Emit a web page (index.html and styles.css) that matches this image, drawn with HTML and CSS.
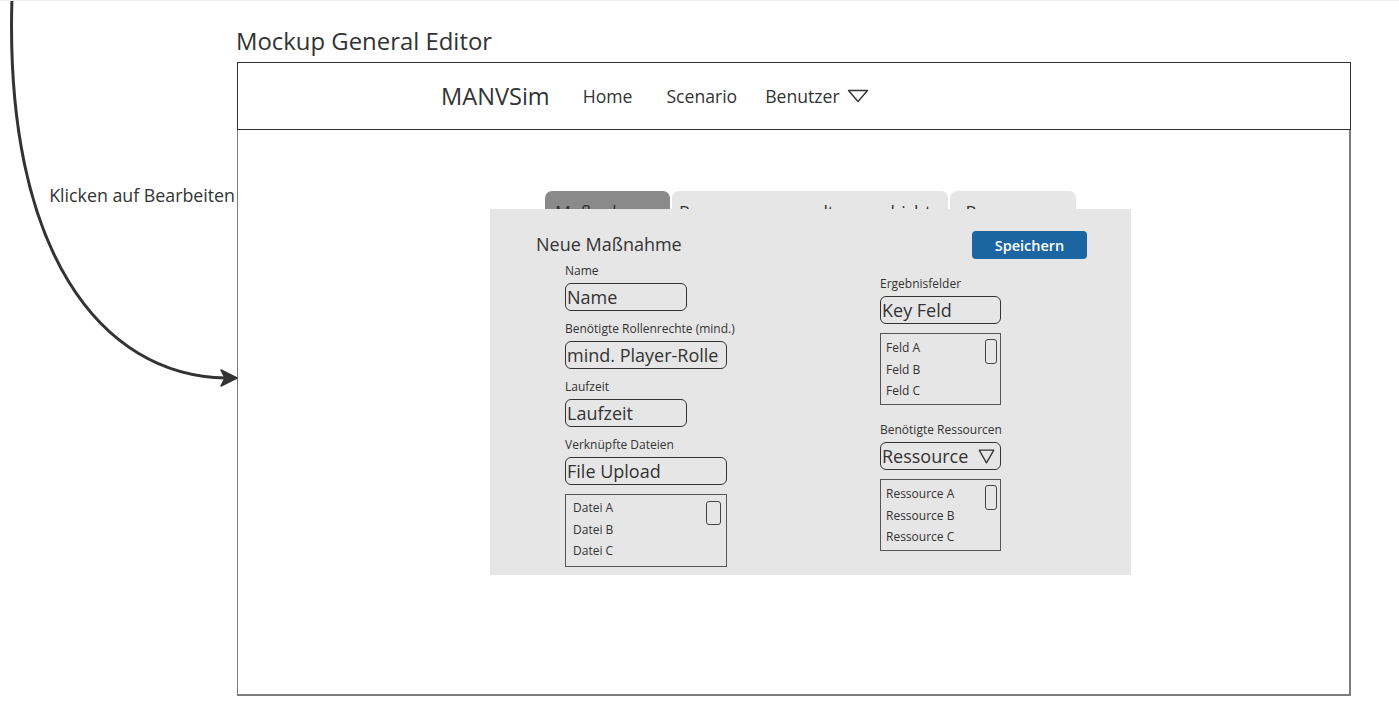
FILE: index.html
```html
<!DOCTYPE html>
<html lang="de">
<head>
<meta charset="utf-8">
<title>Mockup General Editor</title>
<link rel="stylesheet" href="styles.css">
</head>
<body>
<div class="page">
  <svg class="connector" width="240" height="392" viewBox="0 0 240 392" aria-hidden="true">
    <path d="M12,-2 C4,250 100,376 226,378" fill="none" stroke="#333" stroke-width="3"/>
    <path d="M221,370 L237,378 L221,386 L225,378 Z" fill="#333" stroke="#333" stroke-width="1.5" stroke-linejoin="round"/>
  </svg>

  <div class="title">Mockup General Editor</div>

  <div class="stage">
    <div class="note"><span>Klicken auf Bearbeiten</span></div>

    <div class="frame">
      <header class="topbar">
        <span class="brand">MANVSim</span>
        <span class="nav-item nav-home">Home</span>
        <span class="nav-item nav-scenario">Scenario</span>
        <span class="nav-item nav-user">Benutzer
          <svg class="tri tri-nav" width="22" height="14" viewBox="0 0 22 14"><path d="M1.5,1.5 L20.5,1.5 L11,12.5 Z" fill="none" stroke="#333" stroke-width="1.4" stroke-linejoin="round"/></svg>
        </span>
      </header>

      <main class="canvas">
        <div class="tabs">
          <div class="tab tab-active tab-1">Maßnahmen</div>
          <div class="tab tab-2">Ressourcenverwaltungsschichte</div>
          <div class="tab tab-3">Ressourcen</div>
        </div>

        <section class="panel">
          <div class="panel-head">
            <span class="panel-title">Neue Maßnahme</span>
            <button class="btn-save">Speichern</button>
          </div>

          <div class="cols">
            <div class="col col-left">
              <div class="field">
                <div class="label">Name</div>
                <div class="input w-sm">Name</div>
              </div>
              <div class="field">
                <div class="label">Benötigte Rollenrechte (mind.)</div>
                <div class="input w-md">mind. Player-Rolle</div>
              </div>
              <div class="field">
                <div class="label">Laufzeit</div>
                <div class="input w-sm">Laufzeit</div>
              </div>
              <div class="field field-last">
                <div class="label">Verknüpfte Dateien</div>
                <div class="input w-md">File Upload</div>
              </div>
              <div class="listbox list-left">
                <div class="item">Datei A</div>
                <div class="item">Datei B</div>
                <div class="item">Datei C</div>
                <span class="thumb"></span>
              </div>
            </div>

            <div class="col col-right">
              <div class="field field-last">
                <div class="label">Ergebnisfelder</div>
                <div class="input w-rs">Key Feld</div>
              </div>
              <div class="listbox list-right">
                <div class="item">Feld A</div>
                <div class="item">Feld B</div>
                <div class="item">Feld C</div>
                <span class="thumb"></span>
              </div>
              <div class="field field-last field-res">
                <div class="label">Benötigte Ressourcen</div>
                <div class="input w-rs select">
                  <span>Ressource</span>
                  <svg class="tri" width="17" height="15" viewBox="0 0 17 15"><path d="M1.2,1.2 L15.8,1.2 L8.5,13.8 Z" fill="none" stroke="#333" stroke-width="1.3" stroke-linejoin="round"/></svg>
                </div>
              </div>
              <div class="listbox list-right">
                <div class="item">Ressource A</div>
                <div class="item">Ressource B</div>
                <div class="item">Ressource C</div>
                <span class="thumb"></span>
              </div>
            </div>
          </div>
        </section>
      </main>
    </div>
  </div>
</div>
</body>
</html>
```

FILE: styles.css
```css
html, body {
  margin: 0;
  padding: 0;
  background: #ffffff;
}

body {
  font-family: "Open Sans", "Liberation Sans", sans-serif;
  color: #333333;
  border-top: 1px solid #ececec;
}

.page {
  position: relative;
  width: 1399px;
  height: 713px;
  overflow: hidden;
}

.connector {
  position: absolute;
  left: 0;
  top: -1px;
}

.title {
  margin-top: 24px;
  padding-left: 236px;
  font-size: 23.9px;
  line-height: 31px;
  color: #333;
  height: 31px;
  margin-bottom: 6px;
}

.stage {
  display: flex;
}

.note {
  width: 237px;
  flex: none;
  box-sizing: border-box;
  padding-top: 121px;
  padding-right: 2px;
  text-align: right;
  font-size: 17.8px;
  line-height: 24px;
  color: #333;
  white-space: nowrap;
}

.frame {
  width: 1114px;
  flex: none;
  display: flex;
  flex-direction: column;
}

.topbar {
  height: 68px;
  box-sizing: border-box;
  border: 1px solid #333;
  display: flex;
  align-items: center;
  padding-left: 203px;
  padding-bottom: 1px;
}

.brand {
  font-size: 23.6px;
  color: #333;
  margin-right: 33px;
}

.nav-item {
  font-size: 17.6px;
  color: #333;
  display: flex;
  align-items: center;
}

.nav-home { margin-right: 34px; }
.nav-scenario { margin-right: 28px; }

.tri-nav {
  margin-left: 7px;
  margin-top: 1px;
}

.canvas {
  height: 566px;
  box-sizing: border-box;
  border: 1px solid #7d7d7d;
  border-top: none;
  border-right-width: 2px;
  border-bottom-width: 2px;
  padding-top: 61px;
  padding-left: 252px;
}

.tabs {
  display: flex;
  gap: 2px;
  margin-left: 55px;
  height: 18px;
}

.tab {
  height: 18px;
  box-sizing: border-box;
  overflow: hidden;
  border-radius: 7px 7px 0 0;
  background: #e6e6e6;
  font-size: 17.6px;
  line-height: 24px;
  padding-top: 9px;
  color: #333;
  white-space: nowrap;
  text-align: center;
}

.tab-active {
  background: #8a8a8a;
}

.tab-1 { width: 125px; }
.tab-2 { width: 276px; }
.tab-3 { width: 126px; }

.panel {
  width: 641px;
  height: 366px;
  box-sizing: border-box;
  background: #e6e6e6;
  padding: 22px 44px 0 46px;
}

.panel-head {
  height: 28px;
  display: flex;
  align-items: center;
  justify-content: space-between;
}

.panel-title {
  font-size: 18px;
  color: #333;
  margin-top: -3px;
}

.btn-save {
  width: 115px;
  height: 28px;
  border: none;
  border-radius: 4px;
  background: #1b66a2;
  color: #ffffff;
  font-family: "Open Sans", "Liberation Sans", sans-serif;
  font-size: 14.5px;
  font-weight: 600;
  padding: 0;
  cursor: pointer;
}

.cols {
  display: flex;
  padding-left: 29px;
  gap: 153px;
}

.col-left {
  width: 162px;
  padding-top: 4px;
}

.col-right {
  width: 121px;
  padding-top: 17px;
}

.field {
  margin-bottom: 10px;
}

.field-last {
  margin-bottom: 9px;
}

.field-res {
  margin-top: 17px;
}

.label {
  font-size: 12px;
  line-height: 15px;
  color: #333;
  margin-bottom: 5px;
  white-space: nowrap;
}

.input {
  height: 28px;
  box-sizing: border-box;
  border: 1px solid #333;
  border-radius: 6px;
  font-size: 18px;
  line-height: 26px;
  padding-left: 1px;
  color: #333;
  white-space: nowrap;
  overflow: hidden;
}

.w-sm { width: 122px; }
.w-md { width: 162px; }
.w-rs { width: 121px; }

.select {
  display: flex;
  align-items: center;
  justify-content: space-between;
  padding-right: 5px;
}

.select .tri {
  margin-top: 1px;
}

.listbox {
  position: relative;
  box-sizing: border-box;
  border: 1px solid #555;
  padding-top: 2px;
}

.list-left {
  width: 162px;
  height: 73px;
  padding-left: 7px;
}

.list-right {
  width: 121px;
  height: 72px;
  padding-left: 5px;
  padding-top: 3px;
}

.item {
  font-size: 12px;
  line-height: 21.5px;
  color: #333;
  white-space: nowrap;
}

.thumb {
  position: absolute;
  box-sizing: border-box;
  border: 1.3px solid #444;
  border-radius: 3px;
}

.list-left .thumb {
  right: 5px;
  top: 6px;
  width: 15px;
  height: 24px;
}

.list-right .thumb {
  right: 3px;
  top: 5px;
  width: 12px;
  height: 25px;
}
```
